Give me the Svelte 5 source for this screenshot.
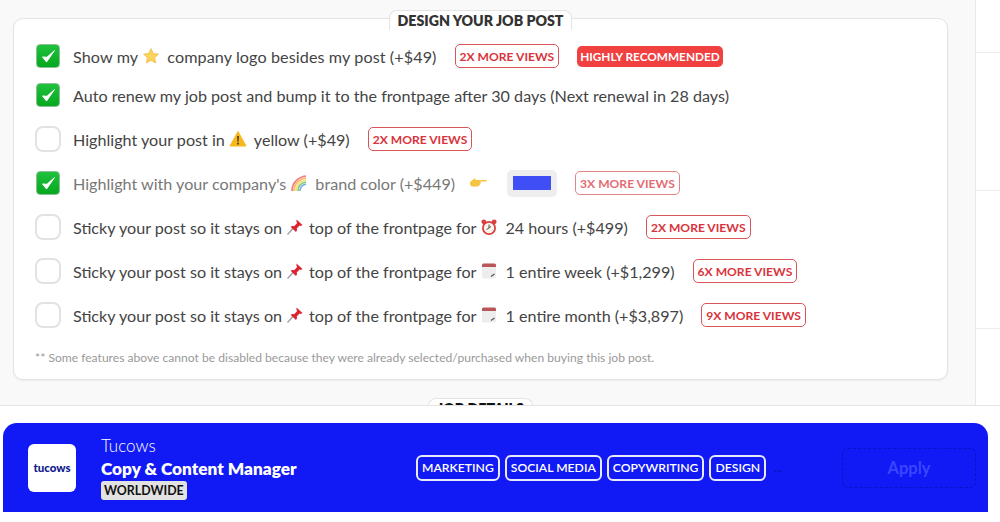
<script>
  const rows = [
    { checked: true, parts: ['Show my', 'star', 'company logo besides my post (+$49)'], views: '2X', top: true },
    { checked: true, parts: ['Auto renew my job post and bump it to the frontpage after 30 days (Next renewal in 28 days)'] },
    { parts: ['Highlight your post in', 'warn', 'yellow (+$49)'], views: '2X' },
    { checked: true, faded: true, brand: true, parts: ['Highlight with your company\'s', 'rainbow', 'brand color (+$449)'], views: '3X' },
    { parts: ['Sticky your post so it stays on', 'pin', 'top of the frontpage for', 'clock', '24 hours (+$499)'], views: '2X' },
    { parts: ['Sticky your post so it stays on', 'pin', 'top of the frontpage for', 'cal', '1 entire week (+$1,299)'], views: '6X' },
    { parts: ['Sticky your post so it stays on', 'pin', 'top of the frontpage for', 'cal', '1 entire month (+$3,897)'], views: '9X' }
  ];
  const icons = ['star', 'warn', 'rainbow', 'pin', 'clock', 'cal'];
  const tags = ['MARKETING', 'SOCIAL MEDIA', 'COPYWRITING', 'DESIGN'];
</script>

{#snippet icon(name)}
  <svg class="emoji" class:pin={name === 'pin'} viewBox="0 0 18 18" aria-hidden="true">
    {#if name === 'star'}
      <path d="M9 1.500l2.300 4.900 5.200.7-3.800 3.600 1 5.300L9 13.400l-4.700 2.600 1-5.300L1.500 7.100l5.200-.7z" fill="#fbd25a" stroke="#e8b23c" stroke-width=".6"/>
    {:else if name === 'warn'}
      <path d="M9 1.500L17 16H1z" fill="#f7b81f" stroke="#f7b81f" stroke-linejoin="round"/>
      <path d="M8.200 6h1.600l-.3 5.800h-1zM8.200 12.800h1.600v1.600H8.200z" fill="#3a2c10"/>
    {:else if name === 'rainbow'}
      <g fill="none" stroke-width="1.700">
        <path d="M2 17C2 9 8 3 16 2" stroke="#ef4a4a"/>
        <path d="M4 17C4 10 9 5 16 4" stroke="#f59b32"/>
        <path d="M6 17C6 11 10 7 16 6" stroke="#f4d53d"/>
        <path d="M8 17C8 12 11 9 16 8" stroke="#58b947"/>
        <path d="M10 17C10 13 12 11 16 10" stroke="#4a90e2"/>
      </g>
    {:else if name === 'pin'}
      <path d="M1.500 16.500L7 10.500" stroke="#9a9a9a" stroke-width="1.200"/>
      <path d="M10.500 1.500l6 5.500-1.800 1-1-.6-3 3.200c.6 1.500.2 2.600-.8 3.400L4.600 8.800c1-.9 2.200-1.100 3.500-.6l3.100-3.200-.7-1.100z" fill="#dc2432"/>
    {:else if name === 'clock'}
      <circle cx="3.800" cy="3.800" r="2.400" fill="#d8413f"/>
      <circle cx="14.200" cy="3.800" r="2.400" fill="#d8413f"/>
      <circle cx="9" cy="10" r="7" fill="#d8413f"/>
      <circle cx="9" cy="10" r="5.200" fill="#f7f3ec"/>
      <path d="M9 6.500V10l-2.500 1.500M9 10l2 -1.500" stroke="#444" stroke-width=".9" fill="none"/>
    {:else}
      <rect x="2" y="1.500" width="14" height="15" rx="1.500" fill="#eeeded"/>
      <path d="M2 5V3a1.500 1.500 0 0 1 1.500-1.500h11A1.500 1.500 0 0 1 16 3v2z" fill="#b9565a"/>
      <path d="M11 14.500l3.500-2.500" stroke="#555" stroke-width="1.300"/>
    {/if}
  </svg>
{/snippet}

<div class="page">
  <div class="top">
    <main class="main">
      <section class="card">
        <h2 class="legend">DESIGN YOUR JOB POST</h2>
        {#each rows as row}
          <div class="row" class:first={row.top}>
            {#if row.checked}
              <span class="box checked">
                <svg viewBox="0 0 24 24" width="19" height="19"><path d="M4.500 12.500l5 6.500L19.500 4.500l-9.500 8.500z" fill="#fff" stroke="#fff" stroke-width="1.200" stroke-linejoin="round"/></svg>
              </span>
            {:else}
              <span class="box"></span>
            {/if}
            <div class="content" class:faded={row.faded}>
              <span class="label" class:wide={row.top}>
                {#each row.parts as part}
                  {#if icons.includes(part)}
                    {@render icon(part)}
                  {:else}
                    <span>{part}</span>
                  {/if}
                {/each}
              </span>
              {#if row.brand}
                <svg class="point" viewBox="0 0 18 12" aria-hidden="true"><path d="M1 5c2-1 3-3 5-3.500l1 1.500h10c1 0 1 1.500 0 1.500H11l1 1c0 1-.5 1-1 1.500 0 1-.5 1-1 1.500-.5 1-1 1-2 1H4C2 10 1 9 1 5z" fill="#f5c443"/></svg>
                <span class="swatch"><span></span></span>
              {/if}
              {#if row.views}
                <span class="views">{row.views} MORE VIEWS</span>
              {/if}
              {#if row.top}
                <span class="reco">HIGHLY RECOMMENDED</span>
              {/if}
            </div>
          </div>
        {/each}
        <p class="note">** Some features above cannot be disabled because they were already selected/purchased when buying this job post.</p>
      </section>
      <h2 class="legend next">JOB DETAILS</h2>
    </main>
    <aside class="side">
      <div></div>
      <div></div>
      <div></div>
      <div></div>
    </aside>
  </div>

  <div class="bottom">
    <div class="bar">
      <div class="logo">tucows</div>
      <div class="info">
        <div class="company">Tucows</div>
        <div class="title">Copy &amp; Content Manager</div>
        <span class="place">WORLDWIDE</span>
      </div>
      <div class="tags">
        {#each tags as tag}
          <span class="tag">{tag}</span>
        {/each}
        <span class="more">...</span>
      </div>
      <div class="apply">Apply</div>
    </div>
  </div>
</div>

<style>
  :global(body) {
    background: #fff;
    font-family: Lato, "Noto Sans", sans-serif;
  }

  .page {
    width: 1000px;
    height: 522px;
    overflow: hidden;
    color: #444;
  }

  .top {
    display: flex;
    height: 405px;
    overflow: hidden;
    background: #f9f9f9;
  }

  .main {
    flex: 1;
    padding: 18px 27px 0 13px;
    text-align: center;
  }

  .card {
    display: flex;
    flex-direction: column;
    height: 362px;
    box-sizing: border-box;
    padding: 0 21px;
    background: #fff;
    border: 1px solid #e4e4e4;
    border-radius: 10px;
    box-shadow: 0 1px 2px rgba(0, 0, 0, 0.06);
    text-align: left;
  }

  .legend {
    align-self: center;
    margin: -9px 0 13px;
    padding: 0 8px;
    height: 19px;
    line-height: 20px;
    font-size: 14.2px;
    font-weight: 800;
    color: #333;
    background: #fff;
    border: 1px solid #e4e4e4;
    border-bottom: 0;
    border-radius: 8px 8px 0 0;
  }

  .legend.next {
    display: inline-block;
    margin: 18px 0 0;
    padding: 0 8px;
    color: #111;
    white-space: nowrap;
  }

  .row {
    display: flex;
    align-items: center;
    gap: 12px;
    height: 26px;
    margin-bottom: 18px;
  }

  .row.first {
    margin-bottom: 13px;
  }

  .box {
    display: flex;
    align-items: center;
    justify-content: center;
    flex: none;
    box-sizing: border-box;
    width: 26px;
    height: 26px;
    background: #fff;
    border: 2px solid #e2e2e2;
    border-radius: 8px;
  }

  .box.checked {
    width: 24px;
    height: 24px;
    margin: 0 1px;
    background: linear-gradient(#1fc23c, #07a81f);
    border: 1px solid #8fbf98;
    border-radius: 4px;
  }

  .content {
    display: flex;
    align-items: center;
    gap: 18px;
  }

  .faded .label,
  .faded .views {
    opacity: 0.72;
  }

  .label {
    display: flex;
    align-items: center;
    gap: 4px;
    font-size: 16.15px;
    white-space: nowrap;
  }

  .label.wide {
    letter-spacing: 0.1px;
  }

  .emoji {
    width: 18px;
    height: 18px;
    margin-right: 3px;
    flex: none;
  }

  .emoji.pin {
    margin-right: 1px;
  }

  .point {
    width: 18px;
    height: 12px;
    margin: 0 2px 0 -4px;
  }

  .swatch {
    display: flex;
    align-items: center;
    justify-content: center;
    width: 50px;
    height: 27px;
    background: #eee;
    border-radius: 5px;
  }

  .swatch span {
    width: 38px;
    height: 14px;
    background: #3f4ff5;
  }

  .views {
    display: flex;
    align-items: center;
    box-sizing: border-box;
    height: 24px;
    padding: 0 4px;
    font-size: 12.1px;
    font-weight: 700;
    color: #d9343c;
    border: 1px solid #d9555a;
    border-radius: 5px;
    white-space: nowrap;
  }

  .reco {
    display: flex;
    align-items: center;
    height: 21px;
    padding: 0 3px;
    font-size: 11.8px;
    font-weight: 700;
    color: #fff;
    background: #f04040;
    border-radius: 5px;
    white-space: nowrap;
  }

  .note {
    margin: 4px 0 0;
    font-size: 12.1px;
    color: #999;
    white-space: nowrap;
  }

  .side {
    width: 24px;
    background: #fff;
    border-left: 1px solid #e8e8e8;
  }

  .side div {
    height: 137px;
    border-bottom: 1px solid #ececec;
  }

  .side div:first-child {
    height: 52px;
  }

  .bottom {
    height: 117px;
    box-sizing: border-box;
    padding: 17px 12px 0 3px;
    background: #fff;
    border-top: 1px solid #e4e4e4;
  }

  .bar {
    display: flex;
    align-items: center;
    height: 89px;
    box-sizing: border-box;
    padding: 0 12px 0 25px;
    background: #1119f5;
    border-radius: 14px 14px 0 0;
  }

  .logo {
    display: flex;
    align-items: center;
    justify-content: center;
    flex: none;
    width: 48px;
    height: 48px;
    font-size: 11.5px;
    font-weight: 900;
    color: #101a8c;
    background: #fff;
    border-radius: 6px;
  }

  .info {
    display: flex;
    flex-direction: column;
    align-items: flex-start;
    width: 315px;
    margin-left: 25px;
    color: #fff;
  }

  .company {
    font-size: 17px;
    font-weight: 300;
    line-height: 22px;
  }

  .title {
    font-size: 17.2px;
    font-weight: 800;
    line-height: 24px;
  }

  .place {
    padding: 0 3px;
    font-size: 12.4px;
    font-weight: 700;
    line-height: 19px;
    color: #111;
    background: #e2e2e2;
    border-radius: 3px;
  }

  .tags {
    display: flex;
    align-items: center;
    gap: 5px;
    flex: 1;
    color: #fff;
  }

  .tag {
    display: flex;
    align-items: center;
    box-sizing: border-box;
    height: 26px;
    padding: 0 4px;
    font-size: 12.2px;
    font-weight: 600;
    border: 2px solid #eaeaff;
    border-radius: 6px;
    white-space: nowrap;
  }

  .more {
    margin-left: 3px;
    font-size: 12px;
    color: #0b10a8;
  }

  .apply {
    display: flex;
    align-items: center;
    justify-content: center;
    flex: none;
    box-sizing: border-box;
    width: 134px;
    height: 40px;
    font-size: 16.5px;
    font-weight: 700;
    color: #3a46ff;
    border: 1px dashed #0b12c8;
    border-radius: 6px;
  }
</style>
